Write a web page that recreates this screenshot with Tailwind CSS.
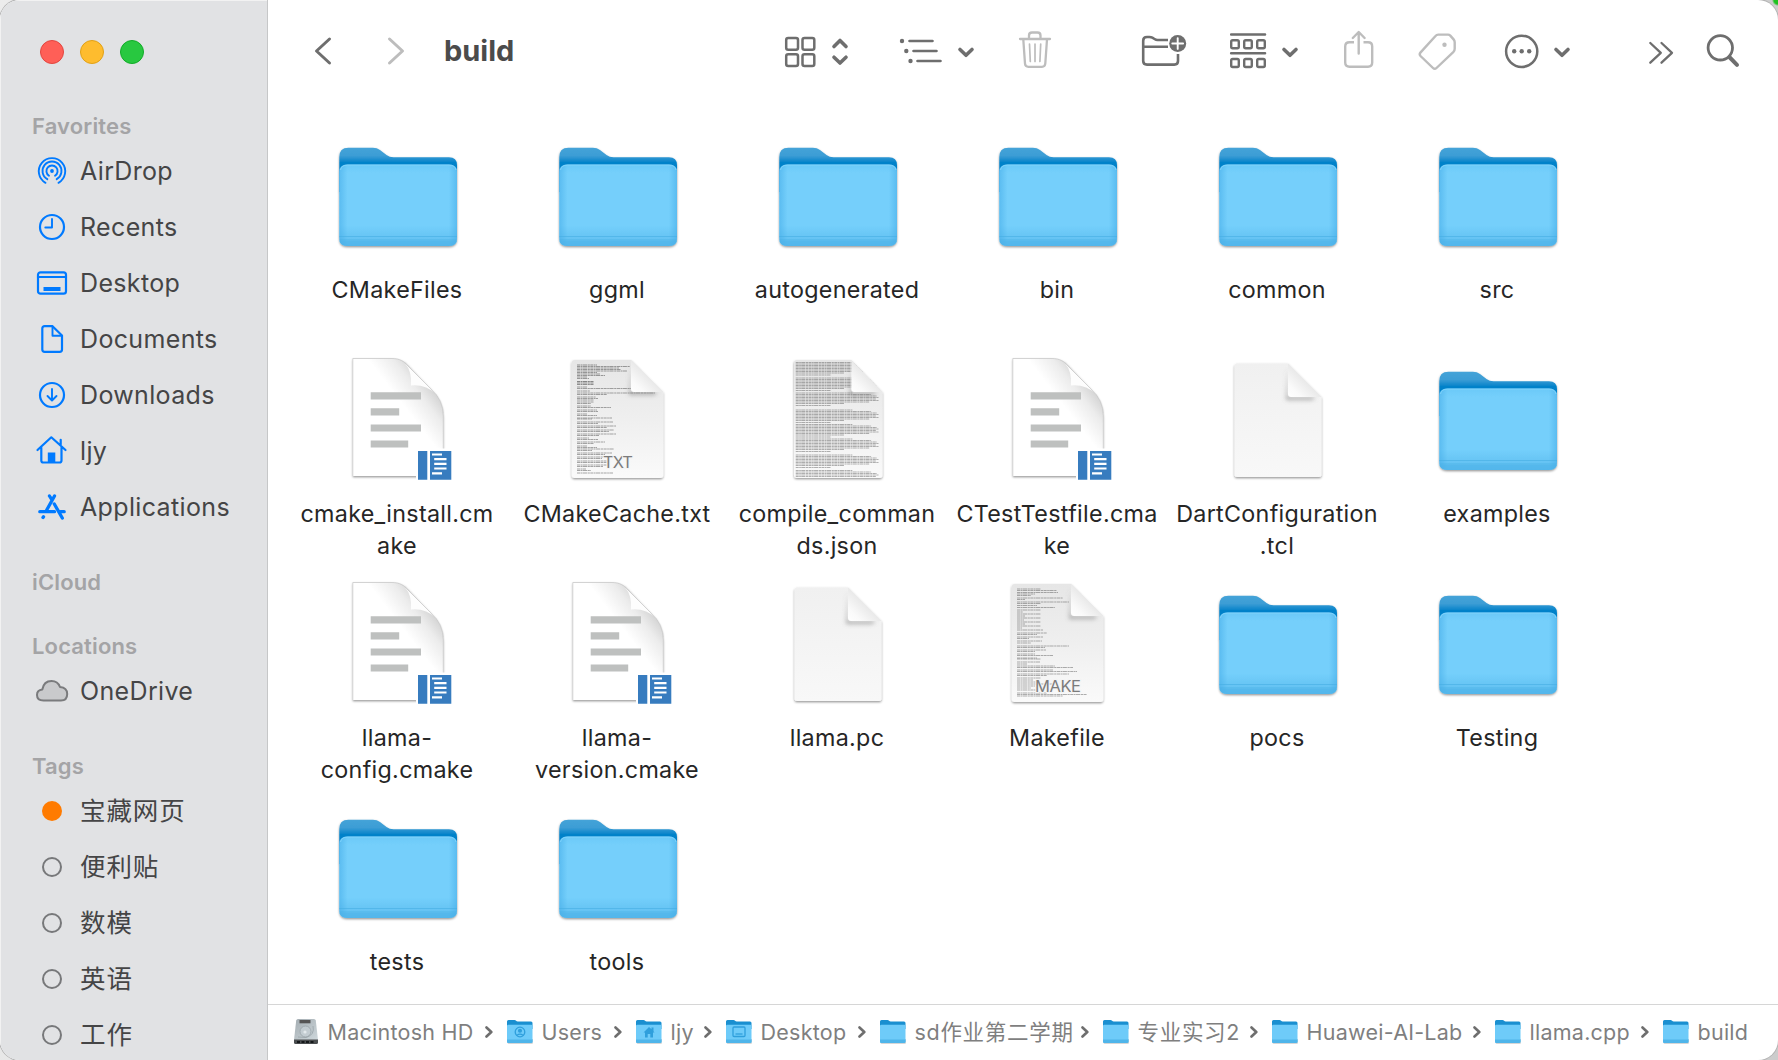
<!DOCTYPE html>
<html lang="en">
<head>
<meta charset="utf-8">
<title>build</title>
<script src="https://cdn.jsdelivr.net/npm/@tailwindcss/browser@4"></script>
</head>
<body class="w-[1778px] h-[1060px] overflow-hidden bg-[radial-gradient(circle_at_100%_0,#1fc21f_0,#1fc21f_4px,transparent_6px),linear-gradient(100deg,#ececec_0%,#d0d0d0_60%,#cccccc_100%)] font-[Inter,'Noto_Sans_CJK_SC',sans-serif]">

<svg class="absolute size-0">
  <defs>
    <linearGradient id="gBack" x1="0" y1="0" x2="0" y2="1"><stop offset="0" stop-color="#45a3d8"/><stop offset=".18" stop-color="#3c9dd5"/><stop offset=".34" stop-color="#0381c9"/><stop offset="1" stop-color="#0381c9"/></linearGradient>
    <linearGradient id="gFront" x1="0" y1="0" x2="0" y2="1"><stop offset="0" stop-color="#6bc9f8"/><stop offset=".1" stop-color="#74cffb"/><stop offset=".75" stop-color="#74cffb"/><stop offset=".87" stop-color="#69c6f5"/><stop offset="1" stop-color="#5cbdf0"/></linearGradient>
    <linearGradient id="gSide" x1="0" y1="0" x2="1" y2="0"><stop offset="0" stop-color="#3fa9e6" stop-opacity=".5"/><stop offset=".07" stop-color="#3fa9e6" stop-opacity="0"/><stop offset=".93" stop-color="#3fa9e6" stop-opacity="0"/><stop offset="1" stop-color="#3fa9e6" stop-opacity=".5"/></linearGradient>
    <linearGradient id="gPage" x1="0" y1="0" x2="0" y2="1"><stop offset="0" stop-color="#e6e6e6"/><stop offset=".5" stop-color="#efefef"/><stop offset="1" stop-color="#fafafa"/></linearGradient>
    <linearGradient id="gPlain" x1="0" y1="0" x2="0" y2="1"><stop offset="0" stop-color="#f0f0f0"/><stop offset="1" stop-color="#f8f8f8"/></linearGradient>
    <linearGradient id="gFold" x1="0" y1="1" x2=".5" y2=".5"><stop offset="0" stop-color="#ffffff"/><stop offset=".4" stop-color="#fafafa"/><stop offset="1" stop-color="#e9e9e9"/></linearGradient>
    <linearGradient id="gCurl" x1="0" y1="1" x2="1" y2="0"><stop offset="0" stop-color="#fff"/><stop offset=".58" stop-color="#fff"/><stop offset=".72" stop-color="#ececec"/><stop offset=".82" stop-color="#d2d2d2"/></linearGradient>
    <linearGradient id="gDisk" x1="0" y1="0" x2="1" y2="1"><stop offset="0" stop-color="#a3acb1"/><stop offset="1" stop-color="#cfd8dc"/></linearGradient>
    <filter id="sh" x="-10%" y="-10%" width="120%" height="125%"><feDropShadow dx="0" dy="1.2" stdDeviation="1" flood-color="#000" flood-opacity=".42"/></filter>
    <filter id="soft" x="-30%" y="-30%" width="160%" height="160%"><feGaussianBlur stdDeviation="2.2"/></filter>
    <clipPath id="cPage"><path d="M17.700 7a3 3 0 0 1 3-3H77L109.300 36V119a3 3 0 0 1-3 3H20.700a3 3 0 0 1-3-3z"/></clipPath>
  </defs>
  <symbol id="folder" viewBox="0 0 128 128">
    <g filter="url(#sh)">
      <path fill="url(#gBack)" d="M5.300 25q0-9.300 9-9.300H39q4 0 7 2.300l6.500 5q3 2.300 7 2.300H115q8 0 8 8V60H5.300z"/>
      <path fill="url(#gFront)" d="M5.300 40q0-7.500 8-7.500H115q8 0 8 7.500V106q0 8-8 8H13.300q-8 0-8-8z"/>
    </g>
    <path fill="url(#gSide)" d="M5.300 40q0-7.500 8-7.500H115q8 0 8 7.500V106q0 8-8 8H13.300q-8 0-8-8z"/>
    <path stroke="#8bdafd" stroke-opacity=".7" fill="none" d="M6.500 38q1-5 7-5H115q6 0 7 5"/>
    <path stroke="#46aee3" stroke-opacity=".6" fill="none" d="M5.300 104.500H123M5.300 108H123"/>
    <path fill="#4bb1e8" fill-opacity=".55" d="M5.300 109H123q-1 5-8 5H13.300q-7 0-8-5z"/>
  </symbol>
  <symbol id="minifolder" viewBox="0 0 28 26">
    <path fill="#8a8a8a" fill-opacity=".35" d="M1.500 20H27V23.500q0 1.500-1.500 1.500h-22.500q-1.500 0-1.500-1.500z"/>
    <path fill="#1a8fd0" d="M1 2.500Q1 1 2.500 1H8.500q1 0 1.600.7t1.600.7H25q1.500 0 1.500 1.500V10H1z"/>
    <path fill="#6ecbf9" d="M1 7q0-1.200 1.200-1.200H25.300q1.200 0 1.200 1.200V22.500q0 1.500-1.500 1.500h-22.500q-1.500 0-1.500-1.500z"/>
    <path fill="#4fb5ea" d="M1 20.500H26.500V22.500q0 1.500-1.500 1.500h-22.500q-1.500 0-1.500-1.500z"/>
  </symbol>
  <symbol id="cmake" viewBox="0 0 128 128">
    <path filter="url(#sh)" fill="url(#gCurl)" d="M18.800 2.500H58C68 2.500 72 6 77 12L97 33Q109.300 44 109.300 60V120H18.800z"/>
    <path fill="#fdfdfd" d="M71 7.500Q78 15 77 29.500Q91 28 103 38.500z"/>
    <path stroke="#c9c9c9" stroke-width=".8" fill="none" d="M18.800 120V2.500H58C66 2.500 70 5.500 74 10L97 33Q109.300 44 109.300 60V93"/>
    <path fill="#bec0bf" d="M36.700 36.300h50.300v7.200H36.700zM36.700 52.300h28.500v7.200H36.700zM36.700 68.400h50.300v7.200H36.700zM36.700 84.400h37.500v7.200H36.700z"/>
    <path fill="#fff" d="M82 92.500H120V126H82z"/>
    <path fill="#377cbf" d="M84 95H93.300V123.700H84zM96 95H117.300V123.700H96z"/>
    <path stroke="#fff" stroke-width="2.200" d="M98 98.500h10M100.200 103.200h12.300M100.200 107.900h12.300M100.200 112.500h12.300M98 117.300h10"/>
  </symbol>
  <symbol id="plain" viewBox="0 0 128 128">
    <path filter="url(#sh)" fill="url(#gPlain)" d="M20.500 10q0-2.500 2.500-2.500H74L107.500 41V118.500q0 2.500-2.500 2.500H23q-2.500 0-2.500-2.500z"/>
    <path fill="#777" fill-opacity=".6" filter="url(#soft)" d="M74 12V41H102L98 44H72z"/>
    <path fill="url(#gFold)" d="M74 7.500 107.500 41H77q-3 0-3-3z"/>
  </symbol>
  <symbol id="page" viewBox="0 0 128 128">
    <path filter="url(#sh)" fill="url(#gPage)" d="M17.700 7a3 3 0 0 1 3-3H77L109.300 36V119a3 3 0 0 1-3 3H20.700a3 3 0 0 1-3-3z"/>
  </symbol>
  <symbol id="fold" viewBox="0 0 128 128">
    <path fill="#777" fill-opacity=".6" filter="url(#soft)" d="M77 8V36H104L100 39H75z"/>
    <path fill="url(#gFold)" d="M77 4 109.300 36H80q-3 0-3-3z"/>
  </symbol>
</svg>

<div class="flex w-[1778px] h-[1060px] rounded-[20px] overflow-hidden bg-white ring-1 ring-[#b4b4b4]">

  <aside class="w-[268px] h-full shrink-0 bg-[#e1e2e4] border-r border-[#c6c7c8] shadow-[inset_1px_1px_0_#f2f2f2] text-[#454546] overflow-hidden">
    <div class="flex items-center gap-4 h-[104px] pl-10">
      <span class="size-6 rounded-full bg-[#ff5f57] border border-[#e2463f]"></span>
      <span class="size-6 rounded-full bg-[#febc2e] border border-[#e1a116]"></span>
      <span class="size-6 rounded-full bg-[#28c840] border border-[#12ac28]"></span>
    </div>
    <nav id="side" class="pt-[5px]"></nav>
  </aside>

  <main class="flex flex-col flex-1 min-w-0">
    <header class="flex h-[104px] shrink-0 text-[#6e6e6e]">
      <svg class="w-[177px] h-[104px]" viewBox="268 0 177 104" fill="none" stroke-width="3" stroke-linecap="round" stroke-linejoin="round"><path stroke="#6e6e6e" d="M329.500 39 316.500 51 329.500 63"/><path stroke="#bdbdbd" d="M389.500 39 402.500 51 389.500 63"/></svg>
      <h1 class="w-[315px] pt-[1px] text-[29px] leading-[100px] font-bold text-[#4b4b4b] -ml-px">build</h1>
      <svg class="w-[220px] h-[104px] ml-px" viewBox="760 0 220 104" fill="none" stroke="currentColor" stroke-width="2.500" stroke-linecap="round" stroke-linejoin="round">
        <rect x="786.200" y="38" width="11.800" height="11.800" rx="2"/><rect x="802.500" y="38" width="11.800" height="11.800" rx="2"/><rect x="786.200" y="54.300" width="11.800" height="11.800" rx="2"/><rect x="802.500" y="54.300" width="11.800" height="11.800" rx="2"/>
        <path stroke-width="3.600" d="M834 46.500 840 40.500 846 46.500M834 57.200 840 63 846 57.200M960 49.500 966 55.300 972 49.500"/>
        <path stroke-width="2.600" d="M909.500 41H932.500M913.500 51H936.500M917.500 61H940.500"/>
        <g fill="currentColor" stroke="none"><circle cx="902" cy="41" r="2.200"/><circle cx="906.300" cy="51" r="2.200"/><circle cx="910.500" cy="61" r="2.200"/></g>
      </svg>
      <svg class="w-[110px] h-[104px]" viewBox="980 0 110 104" fill="none" stroke="#bdbdbd" stroke-width="2.300" stroke-linecap="round" stroke-linejoin="round">
        <path d="M1020 39H1050M1029 38V35.500Q1029 32.500 1032 32.500H1037.500Q1040.500 32.500 1040.500 35.500V38M1023.300 39.500 1025 63.500Q1025.200 66.800 1028.500 66.800H1042Q1045 66.800 1045.300 63.500L1047 39.500"/>
        <path stroke-width="1.700" d="M1029.500 44 1030.300 61.500M1035 44V61.500M1040.700 44 1039.900 61.500"/>
      </svg>
      <svg class="w-[120px] h-[104px]" viewBox="1090 0 120 104" fill="none" stroke="currentColor" stroke-width="2.600" stroke-linecap="butt" stroke-linejoin="round">
        <path d="M1168 40H1157.500Q1156 40 1154.500 39L1152.300 37.700Q1151 37 1149.500 37H1147Q1143.200 37 1143.200 40.700V61Q1143.200 64.600 1147 64.600H1174.300Q1178 64.600 1178 61V54M1143.200 46.800H1168"/>
        <circle cx="1177.700" cy="43.500" r="8.500" fill="currentColor" stroke="none"/><path stroke="#fff" stroke-width="1.900" stroke-linecap="round" d="M1172.300 43.500H1183.100M1177.700 38.100V48.900"/>
      </svg>
      <svg class="w-[110px] h-[104px]" viewBox="1210 0 110 104" fill="none" stroke="currentColor" stroke-width="2.400" stroke-linecap="round">
        <path stroke-width="2.600" d="M1231.200 34.500H1265M1231.200 53.300H1265"/>
        <rect x="1231.200" y="40.200" width="7.600" height="8" rx="1.500"/><rect x="1244.200" y="40.200" width="7.600" height="8" rx="1.500"/><rect x="1257.200" y="40.200" width="7.600" height="8" rx="1.500"/>
        <rect x="1231.200" y="59" width="7.600" height="8" rx="1.500"/><rect x="1244.200" y="59" width="7.600" height="8" rx="1.500"/><rect x="1257.200" y="59" width="7.600" height="8" rx="1.500"/>
        <path stroke-width="3.600" stroke-linejoin="round" d="M1284 49.500 1290 55.300 1296 49.500"/>
      </svg>
      <svg class="w-[160px] h-[104px]" viewBox="1320 0 160 104" fill="none" stroke="#bdbdbd" stroke-width="2.400" stroke-linecap="round" stroke-linejoin="round">
        <path stroke-linecap="butt" d="M1354 42.300H1349.500Q1345.200 42.300 1345.200 46.500V62.500Q1345.200 66.700 1349.500 66.700H1368Q1372.200 66.700 1372.200 62.500V46.500Q1372.200 42.300 1368 42.300H1363.500"/><path d="M1358.700 53.500V32.500M1352.800 38 1358.700 32 1364.600 38"/>
        <path d="M1438.200 34.600H1448Q1449.300 34.600 1450.300 35.600L1453.600 39.400Q1454.700 40.700 1454.700 42.300V48.800Q1454.700 50.500 1453.500 51.800L1436.500 68Q1434.700 69.700 1433 68L1420.500 56Q1419 54.300 1420.400 52.600L1435.500 36Q1436.700 34.600 1438.200 34.600z"/><circle cx="1444.500" cy="44.700" r="2.200" fill="#bdbdbd" stroke="none"/>
      </svg>
      <svg class="w-[120px] h-[104px]" viewBox="1480 0 120 104" fill="none" stroke="currentColor" stroke-width="2.500" stroke-linecap="round" stroke-linejoin="round">
        <circle cx="1521.700" cy="51.300" r="15.600"/><g fill="currentColor" stroke="none"><circle cx="1514.200" cy="51.300" r="2.200"/><circle cx="1521.700" cy="51.300" r="2.200"/><circle cx="1529.200" cy="51.300" r="2.200"/></g>
        <path stroke-width="3.600" d="M1556 49.500 1562 55.300 1568 49.500"/>
      </svg>
      <svg class="w-[178px] h-[104px]" viewBox="1600 0 178 104" fill="none" stroke="currentColor" stroke-width="2.300" stroke-linecap="round" stroke-linejoin="round">
        <path d="M1650.300 43 1660.800 52.800 1650.300 62.700M1661.500 43 1672 52.800 1661.500 62.700"/>
        <circle cx="1720.300" cy="47.800" r="12.200" stroke-width="2.800"/><path stroke-width="4" d="M1729.800 57.500 1737 64.800"/>
      </svg>
    </header>

    <section id="grid" class="grid grid-cols-[repeat(6,220px)] auto-rows-[224px] flex-1 pl-[19px] pt-[28px] content-start overflow-hidden"></section>

    <footer id="path" class="flex items-center h-[56px] shrink-0 border-t border-[#d6d6d6] text-[#7f7f7f] text-[21.5px] tracking-[0.25px] pl-6"></footer>
  </main>
</div>

<script>
const blue = (body) => `<svg class="size-9" viewBox="0 0 36 36" fill="none" stroke="#007aff" stroke-width="2.200" stroke-linecap="round" stroke-linejoin="round">${body}</svg>`;
const icons = {
  airdrop: blue('<circle cx="18" cy="18" r="1.900" fill="#007aff" stroke="none"/><path stroke-width="1.900" d="M11.500 29.800A13.200 13.200 0 1 1 24.500 29.800M13.300 26.200A9.500 9.500 0 1 1 22.700 26.200M15 22.800A5.600 5.600 0 1 1 21 22.800"/>'),
  recents: blue('<circle cx="18" cy="18" r="12"/><path stroke-width="1.900" d="M18 10V18.500H11.300"/>'),
  desktop: blue('<rect x="4" y="7.300" width="28" height="21.400" rx="2.500"/><path d="M4 12H32"/><path stroke="none" fill="#007aff" d="M9.500 22H26.500V26H9.500z"/>'),
  documents: blue('<path d="M11.500 5.200H18.500L28 14.500V28.500Q28 30.800 25.700 30.800H10.700Q8.300 30.800 8.300 28.500V7.500Q8.300 5.200 10.700 5.200z"/><path stroke-width="1.900" d="M18.500 5.500V14.700H27.500"/>'),
  downloads: blue('<circle cx="18" cy="18" r="12"/><path stroke-width="1.900" d="M18 12V23.200M13.500 19 18 23.500 22.500 19"/>'),
  home: blue('<path d="M3.500 17 17.300 4.300 31.500 17M7.300 14.500V27.500Q7.300 29.500 9.300 29.500H25.500Q27.500 29.500 27.500 27.500V14.500M26.700 11.500V6.800"/><path fill="#007aff" stroke="none" d="M13.800 19.500H21.300V29.500H13.800z"/>'),
  apps: blue('<path stroke-width="3.300" d="M20.500 7 12.700 21M15.500 7 17.500 10.200M5.800 22.700H20.500M20.300 15 28.300 29M26.500 22.700H30.200M9.500 27.800 9 28.500"/>'),
  cloud: '<svg class="size-9" viewBox="0 0 36 36" fill="#c9cacc" stroke="#7a7b7d" stroke-width="2" stroke-linejoin="round"><path d="M9.500 27.500Q3 27.500 3 22Q3 17 8.300 16.500Q9.800 8 17.500 8Q23.800 8 26 14Q33.200 14.700 33.200 21Q33.200 27.500 27 27.500z"/></svg>',
  orange: '<span class="size-5 rounded-full bg-[#ff7b00]"></span>',
  ring: '<span class="size-5 rounded-full border-2 border-[#77787a]"></span>'
};
const groups = [
  ['Favorites', [['airdrop','AirDrop'],['recents','Recents'],['desktop','Desktop'],['documents','Documents'],['downloads','Downloads'],['home','ljy'],['apps','Applications']]],
  ['iCloud', []],
  ['Locations', [['cloud','OneDrive']]],
  ['Tags', [['orange','宝藏网页'],['ring','便利贴'],['ring','数模'],['ring','英语'],['ring','工作']]]
];
document.getElementById('side').innerHTML = groups.map(([title, rows]) =>
  `<div class="mb-[30px]"><h2 class="h-[34px] leading-[34px] pl-8 text-[22px] font-semibold tracking-[0.15px] text-[#a4a4a6]">${title}</h2>` +
  rows.map(([i, t]) => `<div class="flex items-center h-14 pl-[34px]"><span class="flex justify-center w-9">${icons[i]}</span><span class="pl-[10px] leading-8 whitespace-nowrap ${title === 'Tags' ? 'text-[25.5px] tracking-[0.9px]' : 'text-[25px] tracking-[0.35px]'}">${t}</span></div>`).join('') + '</div>').join('');

/* Miniature text previews: each entry is [y, x, width, darkness] */
function bars(list) {
  return list.map(([y, x, w, o]) => `<path d="M${x} ${y}h${w}" stroke="#333" stroke-opacity="${o}" stroke-width="1" stroke-dasharray="3.100 .5 1.700 .4 4.300 .6 2.200 .5" fill="none"/>`).join('');
}
const txtLines = [[9,23,20,.5],[10.500,23,53,.45],[12,23,42,.45],[13.500,23,44,.45],[15,23,50,.45],[16.500,23,20,.45],[18,23,23,.45],[19.500,23,28,.45],[21,23,10,.45],[22.500,23,12,.45],[25.500,23,17,.55],[27,23,17,.55],[28.500,23,17,.5]];
[[31,10],[32.500,62],[35,13],[37,78],[38.500,30],[41,19],[42.500,21],[44,17],[46,17],[47.500,14],[50,14],[51.500,34],[54,20],[55.500,21],[58,10],[59.500,20],[62,35],[63,15],[66,36],[67.500,21],[70,39],[71.500,30],[74,37],[75.500,32],[78,39],[79.500,22],[82,12],[83.500,21],[86,28],[87.500,17],[90,10],[91.500,20],[93,37],[94.500,15],[97,35],[98.500,28],[101,36],[102.500,25],[105,33],[106.500,30],[109,31],[110.500,26],[113,9],[114.500,14],[117,36]].forEach(([y, w]) => txtLines.push([y, 23, w, .42]));
const jsonLines = [];
[6.500,22,37,54,68.500,83,99,114.500].forEach(y => [[0,59],[1.500,78],[3,84],[4.500,86],[6,83],[7.500,86],[9,76],[10.500,50],[12.500,36]].forEach(([d, w]) => { if (y + d < 121) jsonLines.push([y + d, 19.500, w, .38]); }));
const makeLines = [];
[[9,24],[10.500,40],[12.500,41],[14,18],[15.500,14],[18,46],[19.500,8],[22,52],[23.500,24],[25.500,20],[27.500,38],[30,24],[32,6],[34,24],[36,8],[38,24],[40,7],[42,24],[44,8],[46,24],[48,5],[50,26],[53,30],[54.500,20],[57,26],[58.500,12],[61,25],[63,14],[66,52],[67.500,28],[70,29],[71.500,18],[74,18],[75.500,36],[78,20],[79,24],[82,23],[84,10],[86,38],[87.500,56],[90,36],[91.500,60],[94,52],[95.500,30],[98,24],[100,16],[102,20],[104,40],[106,18],[108,14],[110,20],[113,30],[114.500,70],[116,46]].forEach(([y, w]) => makeLines.push([y, 23, w, .38]));

const svg = (body) => `<svg class="size-32 ml-px" viewBox="0 0 128 128">${body}</svg>`;
const u = (id) => `<use href="#${id}" width="128" height="128"/>`;
const preview = (lines, label, x, w) => svg(`<g${label ? '' : ' transform="translate(2.900 0) scale(.966 1)"'}>` + u('page') + `<g clip-path="url(#cPage)">${bars(lines)}</g>` + u('fold') + '</g>' +
  (label ? `<text x="${x}" y="112" textLength="${w}" font-size="16.500" class="font-[Inter,sans-serif]" fill="#7c7c7c" stroke="#f4f4f4" stroke-width="2" paint-order="stroke">${label}</text>` : ''));
const art = { folder: svg(u('folder')), cmake: svg(u('cmake')), plain: svg(u('plain')),
  txt: preview(txtLines, 'TXT', 49, 30), json: preview(jsonLines), make: preview(makeLines, 'MAKE', 41, 46) };
const files = [
  ['folder','CMakeFiles'],['folder','ggml'],['folder','autogenerated'],['folder','bin'],['folder','common'],['folder','src'],
  ['cmake','cmake_install.cm<br>ake'],['txt','CMakeCache.txt'],['json','compile_comman<br>ds.json'],['cmake','CTestTestfile.cma<br>ke'],['plain','DartConfiguration<br>.tcl'],['folder','examples'],
  ['cmake','llama-<br>config.cmake'],['cmake','llama-<br>version.cmake'],['plain','llama.pc'],['make','Makefile'],['folder','pocs'],['folder','Testing'],
  ['folder','tests'],['folder','tools']
];
document.getElementById('grid').innerHTML = files.map(([k, n]) =>
  `<figure class="flex flex-col items-center">${art[k]}<figcaption class="mt-[14px] text-[23.3px] leading-8 tracking-[0.3px] text-center text-[#262626] whitespace-nowrap">${n}</figcaption></figure>`).join('');

const mini = (body) => `<svg class="w-7 h-[26px]" viewBox="0 0 28 26"><use href="#minifolder" width="28" height="26"/><g fill="none" stroke="#2f9fdc" stroke-width="1.300">${body}</g></svg>`;
const disk = `<svg class="w-7 h-[26px]" viewBox="0 0 28 26"><path fill="url(#gDisk)" d="M6 0H22Q23.500 0 23.800 1.500L26 21H2L4.200 1.500Q4.500 0 6 0z"/><path fill="#4a4d4f" d="M2 20.500H26V23.500Q26 25 24.500 25H3.500Q2 25 2 23.500z"/><path fill="#555" d="M7.500 1H18.500V4.300H7.500z"/><path stroke="#15181a" stroke-width="2" stroke-dasharray="3 1.500" d="M5 23H23"/><circle cx="13.500" cy="12.500" r="5.500" fill="#c3ccd1" stroke="#99a3a8" stroke-width=".8"/><path fill="none" stroke="#99a3a8" stroke-width=".8" d="M21 7Q23 16 14 18.500L6 18"/><circle cx="13" cy="13" r="1.600" fill="#e3e9ec"/></svg>`;
const glyphs = {
  none: '', user: '<circle cx="14" cy="13" r="4.800"/><circle cx="14" cy="11.800" r="1.400" fill="#2f9fdc"/><path d="M11 16.300Q14 14 17 16.300"/>',
  house: '<path fill="#2f9fdc" stroke="none" d="M8.500 13.500 14 8 16.500 10.300V8.500H18.500V12.300L19.500 13.500H18V18.500H15.300V15H12.700V18.500H10V13.500z"/>',
  desk: '<rect x="8" y="8" width="12" height="9.500" rx="1"/><path d="M10.500 15H17.500"/>'
};
/* Width of each breadcrumb, wider tracking for the Chinese names */
const W = { a: 'w-[214px]', b: 'w-[129px]', c: 'w-[90px]', d: 'w-[154px]', e: 'w-[223px] tracking-[0.7px]', f: 'w-[169px] tracking-[0.7px]', g: 'w-[223px]', h: 'w-[168px]', i: 'w-[110px]' };
const trail = [['disk','Macintosh HD','a'],['user','Users','b'],['house','ljy','c'],['desk','Desktop','d'],['none','sd作业第二学期','e'],['none','专业实习2','f'],['none','Huawei-AI-Lab','g'],['none','llama.cpp','h'],['none','build','i']];
document.getElementById('path').innerHTML = trail.map(([k, t, w], n) =>
  `<div class="flex items-center shrink-0 -mt-px ${W[w]} pr-[13.5px]">${k === 'disk' ? disk : mini(glyphs[k])}<span class="ml-[7.5px] flex-1 -mt-px whitespace-nowrap leading-8">${t}</span>` +
  (n < trail.length - 1 ? '<svg class="w-2 h-3 shrink-0" viewBox="0 0 8 12" fill="none" stroke="#6e6e6e" stroke-width="2.600" stroke-linecap="round" stroke-linejoin="round"><path d="M1.500 1.500 6.300 6 1.500 10.500"/></svg>' : '') + '</div>').join('');
</script>
</body>
</html>
